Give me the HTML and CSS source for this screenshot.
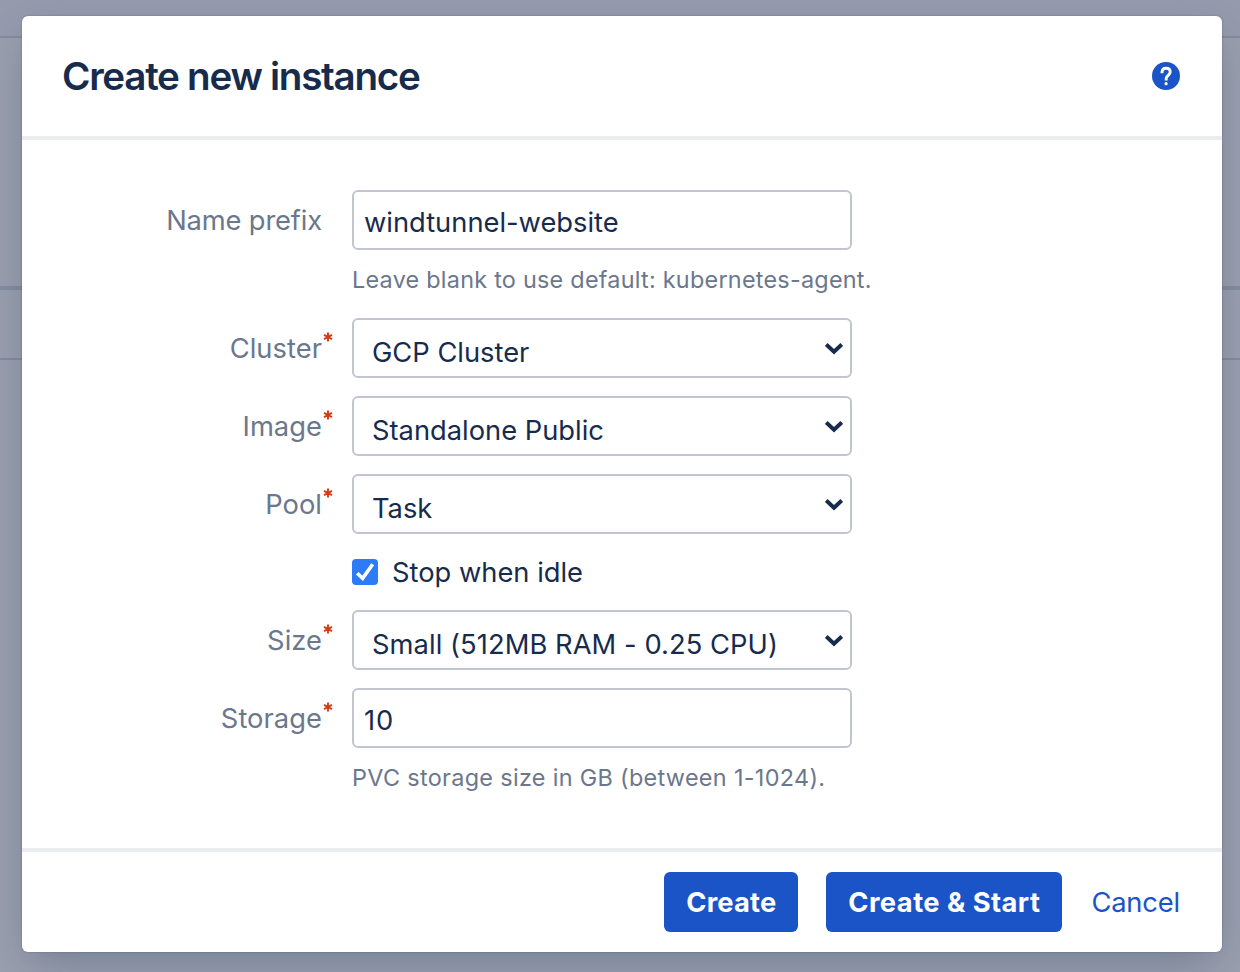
FILE: index.html
```html
<!DOCTYPE html>
<html lang="en">
<head>
<meta charset="utf-8">
<title>Create new instance</title>
<link rel="stylesheet" href="styles.css">
</head>
<body>
<div class="page">
  <div class="page-top"></div>
  <div class="page-head"></div>
  <div class="page-row"></div>
  <div class="page-body"></div>
</div>
<section class="dialog" role="dialog" aria-labelledby="dialog-title">
  <header class="dialog-header">
    <h1 class="dialog-title" id="dialog-title"><span class="t-title">Create new instance</span></h1>
    <svg class="help-icon" viewBox="0 0 28 28" aria-label="Help">
      <circle cx="14" cy="14" r="14" fill="#1b54c7"/>
      <path d="M10 11.3v-.6C10 8 11.700 6.300 14.100 6.300s4.100 1.500 4.100 3.800c0 1.500-.9 2.500-2.100 3.400-1.400 1-1.900 1.700-1.900 3.100v1.900" fill="none" stroke="#fff" stroke-width="2.900"/>
      <circle cx="14.100" cy="21.700" r="1.600" fill="#fff"/>
    </svg>
  </header>
  <form class="dialog-body">
    <div class="row has-help">
      <label class="label"><span class="t-name">Name prefix</span></label>
      <div class="field"><div class="input"><span class="t-wind">windtunnel-website</span></div>
      <p class="help"><span class="t-leave">Leave blank to use default: kubernetes-agent.</span></p></div>
    </div>
    <div class="row">
      <label class="label"><span class="t-label">Cluster</span><svg class="req" viewBox="0 0 10 10"><path d="M5 .6v8.8M1 2.8l8 4.4M9 2.8L1 7.2"/></svg></label>
      <div class="input select"><span class="t-gcp">GCP Cluster</span><svg class="chevron" viewBox="0 0 18 12"><path d="M1.200 1.500L9 8.800 16.800 1.500"/></svg></div>
    </div>
    <div class="row">
      <label class="label"><span class="t-label">Image</span><svg class="req" viewBox="0 0 10 10"><path d="M5 .6v8.8M1 2.8l8 4.4M9 2.8L1 7.2"/></svg></label>
      <div class="input select"><span class="t-stand">Standalone Public</span><svg class="chevron" viewBox="0 0 18 12"><path d="M1.200 1.500L9 8.800 16.800 1.500"/></svg></div>
    </div>
    <div class="row">
      <label class="label"><span class="t-label">Pool</span><svg class="req" viewBox="0 0 10 10"><path d="M5 .6v8.8M1 2.8l8 4.4M9 2.8L1 7.2"/></svg></label>
      <div class="input select"><span class="t-task">Task</span><svg class="chevron" viewBox="0 0 18 12"><path d="M1.200 1.500L9 8.800 16.800 1.500"/></svg></div>
    </div>
    <div class="row check-row">
      <svg class="checkbox" viewBox="0 0 26 26"><rect width="26" height="26" rx="4" fill="#2d7bf6"/><path d="M5.2 14.3l5.500 5.100L20.700 5.200" fill="none" stroke="#fff" stroke-width="3.600"/></svg>
      <span class="t-stop">Stop when idle</span>
    </div>
    <div class="row">
      <label class="label"><span class="t-label">Size</span><svg class="req" viewBox="0 0 10 10"><path d="M5 .6v8.8M1 2.8l8 4.4M9 2.8L1 7.2"/></svg></label>
      <div class="input select"><span class="t-small">Small (512MB RAM - 0.25 CPU)</span><svg class="chevron" viewBox="0 0 18 12"><path d="M1.200 1.500L9 8.800 16.800 1.500"/></svg></div>
    </div>
    <div class="row has-help">
      <label class="label"><span class="t-label">Storage</span><svg class="req" viewBox="0 0 10 10"><path d="M5 .6v8.8M1 2.8l8 4.4M9 2.8L1 7.2"/></svg></label>
      <div class="field"><div class="input"><span class="t-ten">10</span></div>
      <p class="help"><span class="t-pvc">PVC storage size in GB (between 1-1024).</span></p></div>
    </div>
  </form>
  <footer class="dialog-footer">
    <button class="button" type="button"><span class="t-create">Create</span></button>
    <button class="button button-wide" type="button"><span class="t-start">Create &amp; Start</span></button>
    <a class="cancel"><span class="t-cancel">Cancel</span></a>
  </footer>
</section>
</body>
</html>
```

FILE: styles.css
```css
* { box-sizing: border-box; }
body {
  margin: 0;
  height: 972px;
  overflow: hidden;
  font-family: Inter, "Liberation Sans", sans-serif;
  font-size: 27.3px;
  color: #172b4d;
}
span { white-space: nowrap; }

/* dimmed page behind the dialog */
.page { height: 972px; display: flex; flex-direction: column; background: #999fae; }
.page-top { height: 38px; background: #959bad; border-bottom: 2px solid #858c9c; }
.page-head { height: 252px; border-bottom: 4px solid #858da0; }
.page-row { height: 70px; border-bottom: 2px solid #858c9d; }
.page-body { flex: 1; }

.dialog {
  position: absolute;
  top: 16px;
  left: 22px;
  width: 1200px;
  height: 936px;
  display: flex;
  flex-direction: column;
  background: #fff;
  border-radius: 6px;
  box-shadow: 0 0 2px rgba(9, 30, 66, .31), 0 16px 40px -8px rgba(9, 30, 66, .27);
}
.dialog-header {
  height: 124px;
  padding: 0 42px 0 40px;
  display: flex;
  align-items: center;
  justify-content: space-between;
  border-bottom: 4px solid #ebecf0;
}
.dialog-title { margin: 0; font-size: 38.6px; line-height: 48px; font-weight: 600; }
.help-icon { width: 28px; height: 28px; }

.dialog-body { flex: 1; padding: 50px 0 0; display: flex; flex-direction: column; gap: 18px; }
.row { display: grid; grid-template-columns: 310px 500px; column-gap: 20px; height: 60px; }
.has-help { height: 110px; }
.label {
  display: flex;
  justify-content: flex-end;
  align-items: flex-start;
  height: 60px;
  padding-right: 10px;
  line-height: 62px;
  color: #6b778c;
}
.req { width: 10px; height: 10px; margin: 14px -10.5px 0 .5px; fill: none; stroke: #d33b14; stroke-width: 1.9; }
.input {
  height: 60px;
  padding: 5px 10px 0;
  display: flex;
  align-items: center;
  justify-content: space-between;
  line-height: 40px;
  border: 2px solid #c1c5d0;
  border-radius: 6px;
}
.select { padding: 9px 7px 0 18px; }
.chevron { width: 18px; height: 12px; margin-top: -7px; fill: none; stroke: #172b4d; stroke-width: 4; }
.help { margin: 14px 0 0; font-size: 23.4px; line-height: 32px; color: #6b778c; }
.check-row { height: 40px; padding-left: 330px; display: flex; align-items: center; gap: 14px; }
.checkbox { width: 26px; height: 26px; }

.dialog-footer {
  height: 104px;
  padding: 0 42px 0 0;
  display: flex;
  align-items: center;
  justify-content: flex-end;
  border-top: 4px solid #ebecf0;
}
.button {
  width: 134px;
  height: 60px;
  margin: 0 28px 0 0;
  padding: 1px 0 0;
  border: 0;
  border-radius: 6px;
  background: #1b54c7;
  color: #fff;
  font: 700 27.3px/59px Inter, "Liberation Sans", sans-serif;
}
.button-wide { width: 236px; margin-right: 29px; }
.cancel { color: #1b54c7; line-height: 60px; padding-top: 2px; }

/* tracking */
.t-title { letter-spacing: -1.27px; }
.t-label { letter-spacing: 0.05px; }
.t-name { letter-spacing: -0.15px; }
.t-leave { letter-spacing: 0.25px; }
.t-pvc { letter-spacing: 0.33px; }
.t-small { letter-spacing: 0.07px; }
.t-ten { letter-spacing: 1px; }
.t-cancel { letter-spacing: -0.15px; }
.t-create { letter-spacing: 0.2px; }
.t-start { letter-spacing: 0.45px; }
```
